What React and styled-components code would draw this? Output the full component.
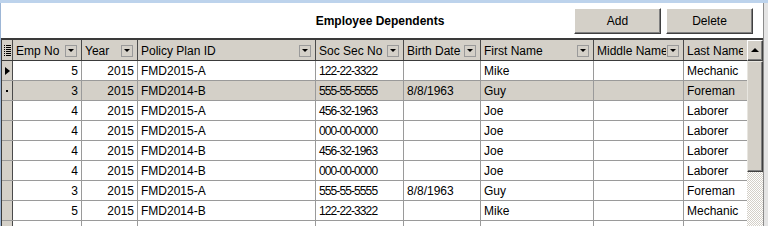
import React from 'react';
import styled, { createGlobalStyle } from 'styled-components';

const Global = createGlobalStyle`
  html, body { margin: 0; padding: 0; background: #fff; overflow: hidden; }
  body { font-family: "Liberation Sans", Arial, sans-serif; font-size: 12px; color: #000; }
  * { box-sizing: border-box; }
`;

const COLS = '11px 69px 56px 178px 88px 77px 113px 90px 63px';

const Frame = styled.div`
  width: 768px;
  height: 226px;
  overflow: hidden;
  border-top: 3px solid #bdd3ec;
  display: flex;
  background: #fff;
`;

const Main = styled.div`
  flex: 1;
  min-width: 0;
  display: flex;
  flex-direction: column;
  border-left: 1px solid #9db6d6;
`;

const RightEdge = styled.div`
  width: 5px;
  border-left: 1px solid #8c8c8c;
  background: #e4e4e4;
`;

const Toolbar = styled.div`
  height: 35px;
  flex: none;
  display: grid;
  grid-template-columns: 1fr auto 1fr;
  align-items: center;
  padding: 0 10px 0 6px;
`;

const Title = styled.div`
  grid-column: 2;
  font-weight: bold;
  font-size: 12px;
  padding-top: 1px;
`;

const Buttons = styled.div`
  grid-column: 3;
  justify-self: end;
  display: flex;
  gap: 5px;
`;

const Button = styled.button`
  width: 87px;
  height: 26px;
  background: #d4d0c8;
  border: 1px solid;
  border-color: #ffffff #404040 #404040 #ffffff;
  box-shadow: inset -1px -1px 0 #808080;
  font-family: "Liberation Sans", Arial, sans-serif;
  font-size: 12px;
  color: #000;
  padding: 0;
`;

const Grid = styled.div`
  flex: 1;
  min-height: 0;
  display: flex;
  border-top: 2px solid #3a3a3a;
`;

const Table = styled.div`
  width: 746px;
  border-left: 1px solid #3a3a3a;
  display: flex;
  flex-direction: column;
`;

const HeaderRow = styled.div`
  display: grid;
  grid-template-columns: ${COLS};
  height: 21px;
  flex: none;
  background: #d4d0c8;
  border-bottom: 1px solid #3a3a3a;
`;

const HeaderCell = styled.div`
  display: flex;
  align-items: center;
  gap: 1px;
  padding: 1px 4px 0 3px;
  border-right: ${p => (p.$last ? 'none' : '1px solid #4a4a4a')};
  overflow: hidden;
  white-space: nowrap;
`;

const HeaderLabel = styled.span`
  flex: 1;
  min-width: 0;
  overflow: hidden;
  white-space: nowrap;
`;

const Drop = styled.span`
  flex: none;
  width: 12px;
  height: 12px;
  background: #d4d0c8;
  border: 1px solid;
  border-color: #f0f0f0 #707070 #707070 #f0f0f0;
  outline: 1px solid #9a9a9a;
  outline-offset: -1px;
  display: flex;
  align-items: center;
  justify-content: center;
  &::after {
    content: '';
    border-left: 3px solid transparent;
    border-right: 3px solid transparent;
    border-top: 3px solid #000;
  }
`;

const SelectorHead = styled.div`
  border-right: 1px solid #4a4a4a;
  display: flex;
  align-items: center;
  justify-content: center;
`;

const DataRow = styled.div`
  display: grid;
  grid-template-columns: ${COLS};
  height: 20px;
  flex: none;
  border-bottom: 1px solid #9a9a9a;
  background: ${p => (p.$selected ? '#d4d0c8' : '#ffffff')};
`;

const Selector = styled.div`
  background: #d4d0c8;
  border-right: 1px solid #4a4a4a;
  display: flex;
  align-items: center;
  justify-content: center;
`;

const Cell = styled.div`
  padding: 0 3px;
  line-height: 20px;
  text-align: ${p => p.$align || 'left'};
  border-right: ${p => (p.$last ? 'none' : '1px solid #9a9a9a')};
  white-space: nowrap;
  overflow: hidden;
  letter-spacing: ${p => (p.$tight ? '-0.9px' : 'normal')};
`;

const Arrow = styled.span`
  border-top: 4px solid transparent;
  border-bottom: 4px solid transparent;
  border-left: 5px solid #000;
`;

const Dot = styled.span`
  width: 2px;
  height: 2px;
  background: #000;
`;

const Scroll = styled.div`
  width: 16px;
  display: flex;
  flex-direction: column;
`;

const ScrollButton = styled.div`
  height: 21px;
  flex: none;
  background: #d4d0c8;
  border: 1px solid;
  border-color: #ffffff #404040 #404040 #ffffff;
  box-shadow: inset -1px -1px 0 #808080;
  display: flex;
  align-items: center;
  justify-content: center;
  &::after {
    content: '';
    border-left: 4px solid transparent;
    border-right: 4px solid transparent;
    border-bottom: 4px solid #000;
    margin-top: -2px;
  }
`;

const Thumb = styled.div`
  height: 111px;
  flex: none;
  background: #d4d0c8;
  border: 1px solid;
  border-color: #e8e6e0 #404040 #404040 #e8e6e0;
  box-shadow: inset -1px -1px 0 #808080;
`;

const Track = styled.div`
  flex: 1;
  background-color: #ffffff;
  background-image: conic-gradient(#d4d0c8 25%, #ffffff 0 50%, #d4d0c8 0 75%, #ffffff 0);
  background-size: 2px 2px;
`;

const ListIcon = () => (
  <svg width="7" height="11" viewBox="0 0 7 11">
    {[0, 2, 4, 6, 8, 10].map(y => (
      <g key={y}>
        <rect x="0" y={y} width="1" height="1" fill="#000" />
        <rect x="2" y={y} width="5" height="1" fill="#000" />
      </g>
    ))}
  </svg>
);

const headers = [
  { label: 'Emp No', drop: true },
  { label: 'Year', drop: true },
  { label: 'Policy Plan ID', drop: true },
  { label: 'Soc Sec No', drop: true },
  { label: 'Birth Date', drop: true },
  { label: 'First Name', drop: true },
  { label: 'Middle Name', drop: true },
  { label: 'Last Name', drop: false },
];

const rows = [
  ['5', '2015', 'FMD2015-A', '122-22-3322', '', 'Mike', '', 'Mechanic'],
  ['3', '2015', 'FMD2014-B', '555-55-5555', '8/8/1963', 'Guy', '', 'Foreman'],
  ['4', '2015', 'FMD2015-A', '456-32-1963', '', 'Joe', '', 'Laborer'],
  ['4', '2015', 'FMD2015-A', '000-00-0000', '', 'Joe', '', 'Laborer'],
  ['4', '2015', 'FMD2014-B', '456-32-1963', '', 'Joe', '', 'Laborer'],
  ['4', '2015', 'FMD2014-B', '000-00-0000', '', 'Joe', '', 'Laborer'],
  ['3', '2015', 'FMD2015-A', '555-55-5555', '8/8/1963', 'Guy', '', 'Foreman'],
  ['5', '2015', 'FMD2014-B', '122-22-3322', '', 'Mike', '', 'Mechanic'],
  ['', '', '', '', '', '', '', ''],
];

const align = ['right', 'right', 'left', 'left', 'left', 'left', 'left', 'left'];

export default function App() {
  return (
    <>
      <Global />
      <Frame>
        <Main>
          <Toolbar>
            <Title>Employee Dependents</Title>
            <Buttons>
              <Button>Add</Button>
              <Button>Delete</Button>
            </Buttons>
          </Toolbar>
          <Grid>
            <Table>
              <HeaderRow>
                <SelectorHead>
                  <ListIcon />
                </SelectorHead>
                {headers.map((h, i) => (
                  <HeaderCell key={h.label} $last={i === headers.length - 1}>
                    <HeaderLabel>{h.label}</HeaderLabel>
                    {h.drop && <Drop />}
                  </HeaderCell>
                ))}
              </HeaderRow>
              {rows.map((r, ri) => (
                <DataRow key={ri} $selected={ri === 1}>
                  <Selector>
                    {ri === 0 && <Arrow />}
                    {ri === 1 && <Dot />}
                  </Selector>
                  {r.map((v, ci) => (
                    <Cell
                      key={ci}
                      $align={align[ci]}
                      $tight={ci === 3}
                      $last={ci === r.length - 1}
                    >
                      {v}
                    </Cell>
                  ))}
                </DataRow>
              ))}
            </Table>
            <Scroll>
              <ScrollButton />
              <Thumb />
              <Track />
            </Scroll>
          </Grid>
        </Main>
        <RightEdge />
      </Frame>
    </>
  );
}
